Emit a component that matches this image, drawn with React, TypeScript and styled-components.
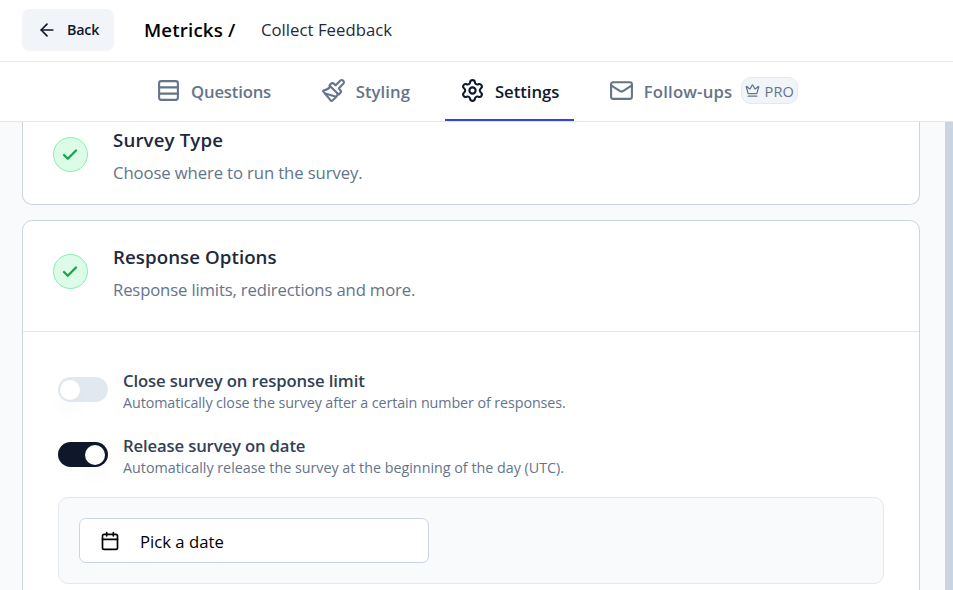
import React from 'react';
import styled, { createGlobalStyle } from 'styled-components';
import { ArrowLeft, Calendar, Check, Crown, Mail, Paintbrush, Rows3, Settings } from 'lucide-react';

const GlobalStyle = createGlobalStyle`
  *, *::before, *::after { box-sizing: border-box; }
  html, body, #root { height: 100%; }
  body {
    margin: 0;
    overflow: hidden;
    background: #fff;
    font-family: "Open Sans", "Segoe UI", sans-serif;
  }
  button, p, h1, h2, h3 { margin: 0; padding: 0; font-family: inherit; }
  svg { display: block; flex-shrink: 0; }
`;

const Page = styled.div`
  display: flex;
  flex-direction: column;
  height: 100vh;
`;

const TopBar = styled.header`
  display: flex;
  align-items: center;
  flex: 0 0 62px;
  padding: 0 22px 2px;
  border-bottom: 1px solid #e2e8f0;
`;

const BackButton = styled.button`
  display: flex;
  align-items: center;
  gap: 10px;
  width: 92px;
  height: 41px;
  padding-left: 15px;
  border: 0;
  border-radius: 7.5px;
  background: #f1f5f9;
  box-shadow: 0 1px 2px rgba(0, 0, 0, 0.05);
  color: #0f172a;
  font-size: 14.3px;
  font-weight: 600;
  letter-spacing: -0.2px;
`;

const ProductName = styled.h1`
  margin-left: 30px;
  color: #000;
  font-size: 18.7px;
  font-weight: 600;
  line-height: 28px;
  letter-spacing: 0.15px;
`;

const SurveyName = styled.span`
  margin-left: 25.5px;
  color: #1e293b;
  font-size: 16.7px;
  letter-spacing: 0.05px;
`;

const Tabs = styled.nav`
  display: flex;
  gap: 18.75px;
  flex: 0 0 60px;
  padding-left: 141px;
  border-bottom: 1px solid #e5e7eb;
`;

const Tab = styled.button<{ $active?: boolean; $width: number; $spacing: number }>`
  display: flex;
  align-items: center;
  width: ${p => p.$width}px;
  height: 59px;
  padding: 0 0 0 15px;
  border: 0;
  border-bottom: 2px solid ${p => (p.$active ? '#3344dc' : 'transparent')};
  background: none;
  color: ${p => (p.$active ? '#0f172a' : '#64748b')};
  font-size: 16.7px;
  font-weight: 600;
  letter-spacing: ${p => p.$spacing}px;
  white-space: nowrap;

  &:last-child { margin-left: 1px; }
`;

const TabLabel = styled.span`
  margin-left: 10px;
  padding-top: 1px;
`;

const ProBadge = styled.span`
  display: flex;
  align-items: center;
  gap: 4px;
  width: 57px;
  height: 27px;
  margin-left: 9px;
  padding-left: 3px;
  border: 1px solid #e2e8f0;
  border-radius: 10px;
  background: #f1f5f9;
  font-size: 14.6px;
  font-weight: 500;
  letter-spacing: 0.2px;
`;

const Body = styled.main`
  display: flex;
  flex: 1;
  min-height: 0;
  background: #f8fafc;
`;

const CardList = styled.div`
  display: flex;
  flex-direction: column;
  gap: 15px;
  flex: 1;
  padding: 0 25px 0 22px;
  overflow: hidden;
`;

const Scrollbar = styled.div`
  width: 8px;
  background: #cbd5e1;
`;

const Card = styled.section<{ $clipped?: boolean }>`
  flex-shrink: 0;
  height: ${p => (p.$clipped ? '83px' : '480px')};
  border: 1px solid #cbd5e1;
  border-radius: 10px;
  background: #fff;
  ${p => p.$clipped && 'border-top: 0; border-top-left-radius: 0; border-top-right-radius: 0;'}
`;

const CardHeader = styled.div<{ $clipped?: boolean }>`
  display: flex;
  height: ${p => (p.$clipped ? '82px' : '111px')};
  padding: ${p => (p.$clipped ? '4px' : '22px')} 30px 0;
  ${p => !p.$clipped && 'border-bottom: 1px solid #e2e8f0;'}
`;

const StatusDot = styled.span`
  display: flex;
  align-items: center;
  justify-content: center;
  width: 35px;
  height: 35px;
  margin: 11px 25px 0 0;
  padding-right: 1px;
  border: 1px solid #86efac;
  border-radius: 50%;
  background: #dcfce7;
  color: #16a34a;
`;

const CardTitle = styled.h2<{ $spacing: number }>`
  color: #1e293b;
  font-size: 18.7px;
  font-weight: 600;
  line-height: 28px;
  letter-spacing: ${p => p.$spacing}px;
`;

const CardText = styled.p<{ $spacing: number }>`
  margin-top: 5px;
  color: #64748b;
  font-size: 16.7px;
  line-height: 27px;
  letter-spacing: ${p => p.$spacing}px;
`;

const CardBody = styled.div`
  padding: 35px;
`;

const Option = styled.div`
  display: flex;
  align-items: center;
  gap: 15px;
  height: 45px;
  margin-bottom: 20px;
`;

const OptionLabel = styled.div`
  padding-top: 2px;
`;

const Switch = styled.span<{ $on?: boolean }>`
  display: flex;
  justify-content: ${p => (p.$on ? 'flex-end' : 'flex-start')};
  width: 50px;
  height: 25px;
  padding: 2.5px 3px 2.5px 2px;
  border-radius: 13px;
  background: ${p => (p.$on ? '#0f172a' : '#e2e8f0')};
`;

const Knob = styled.span`
  width: 20px;
  height: 20px;
  border-radius: 50%;
  background: #fff;
  box-shadow: 0 12px 19px -4px rgba(0, 0, 0, 0.08);
`;

const OptionTitle = styled.h3<{ $spacing: number }>`
  color: #334155;
  font-size: 16.7px;
  font-weight: 600;
  line-height: 23px;
  letter-spacing: ${p => p.$spacing}px;
`;

const OptionText = styled.p<{ $spacing: number }>`
  color: #64748b;
  font-size: 14.3px;
  line-height: 21px;
  letter-spacing: ${p => p.$spacing}px;
`;

const DatePanel = styled.div`
  height: 87px;
  padding: 20px;
  border: 1px solid #e2e8f0;
  border-radius: 10px;
  background: #f8fafc;
`;

const DateButton = styled.button`
  display: flex;
  align-items: center;
  gap: 20px;
  width: 350px;
  height: 45px;
  padding-left: 20px;
  border: 1px solid #cbd5e1;
  border-radius: 7px;
  background: #fff;
  color: #000;
  font-size: 16.7px;
`;

const DateLabel = styled.span`
  padding-top: 1px;
`;

const Done = () => (
  <StatusDot>
    <Check size={18} strokeWidth={3} />
  </StatusDot>
);

export default function App() {
  return (
    <Page>
      <GlobalStyle />
      <TopBar>
        <BackButton>
          <ArrowLeft size={20} />
          Back
        </BackButton>
        <ProductName>Metricks /</ProductName>
        <SurveyName>Collect Feedback</SurveyName>
      </TopBar>
      <Tabs>
        <Tab $width={146} $spacing={-0.18}>
          <Rows3 size={25} />
          <TabLabel>Questions</TabLabel>
        </Tab>
        <Tab $width={120.5} $spacing={0.05}>
          <Paintbrush size={25} />
          <TabLabel>Styling</TabLabel>
        </Tab>
        <Tab $active $width={129} $spacing={-0.05}>
          <Settings size={25} />
          <TabLabel>Settings</TabLabel>
        </Tab>
        <Tab $width={222} $spacing={0.2}>
          <Mail size={25} />
          <TabLabel>Follow-ups</TabLabel>
          <ProBadge>
            <Crown size={15} />
            PRO
          </ProBadge>
        </Tab>
      </Tabs>
      <Body>
        <CardList>
          <Card $clipped>
            <CardHeader $clipped>
              <Done />
              <div>
                <CardTitle $spacing={0.12}>Survey Type</CardTitle>
                <CardText $spacing={-0.11}>Choose where to run the survey.</CardText>
              </div>
            </CardHeader>
          </Card>
          <Card>
            <CardHeader>
              <Done />
              <div>
                <CardTitle $spacing={0.06}>Response Options</CardTitle>
                <CardText $spacing={-0.15}>Response limits, redirections and more.</CardText>
              </div>
            </CardHeader>
            <CardBody>
              <Option>
                <Switch><Knob /></Switch>
                <OptionLabel>
                  <OptionTitle $spacing={-0.11}>Close survey on response limit</OptionTitle>
                  <OptionText $spacing={-0.085}>
                    Automatically close the survey after a certain number of responses.
                  </OptionText>
                </OptionLabel>
              </Option>
              <Option>
                <Switch $on><Knob /></Switch>
                <OptionLabel>
                  <OptionTitle $spacing={-0.14}>Release survey on date</OptionTitle>
                  <OptionText $spacing={0}>
                    Automatically release the survey at the beginning of the day (UTC).
                  </OptionText>
                </OptionLabel>
              </Option>
              <DatePanel>
                <DateButton>
                  <Calendar size={20} />
                  <DateLabel>Pick a date</DateLabel>
                </DateButton>
              </DatePanel>
            </CardBody>
          </Card>
        </CardList>
        <Scrollbar />
      </Body>
    </Page>
  );
}
